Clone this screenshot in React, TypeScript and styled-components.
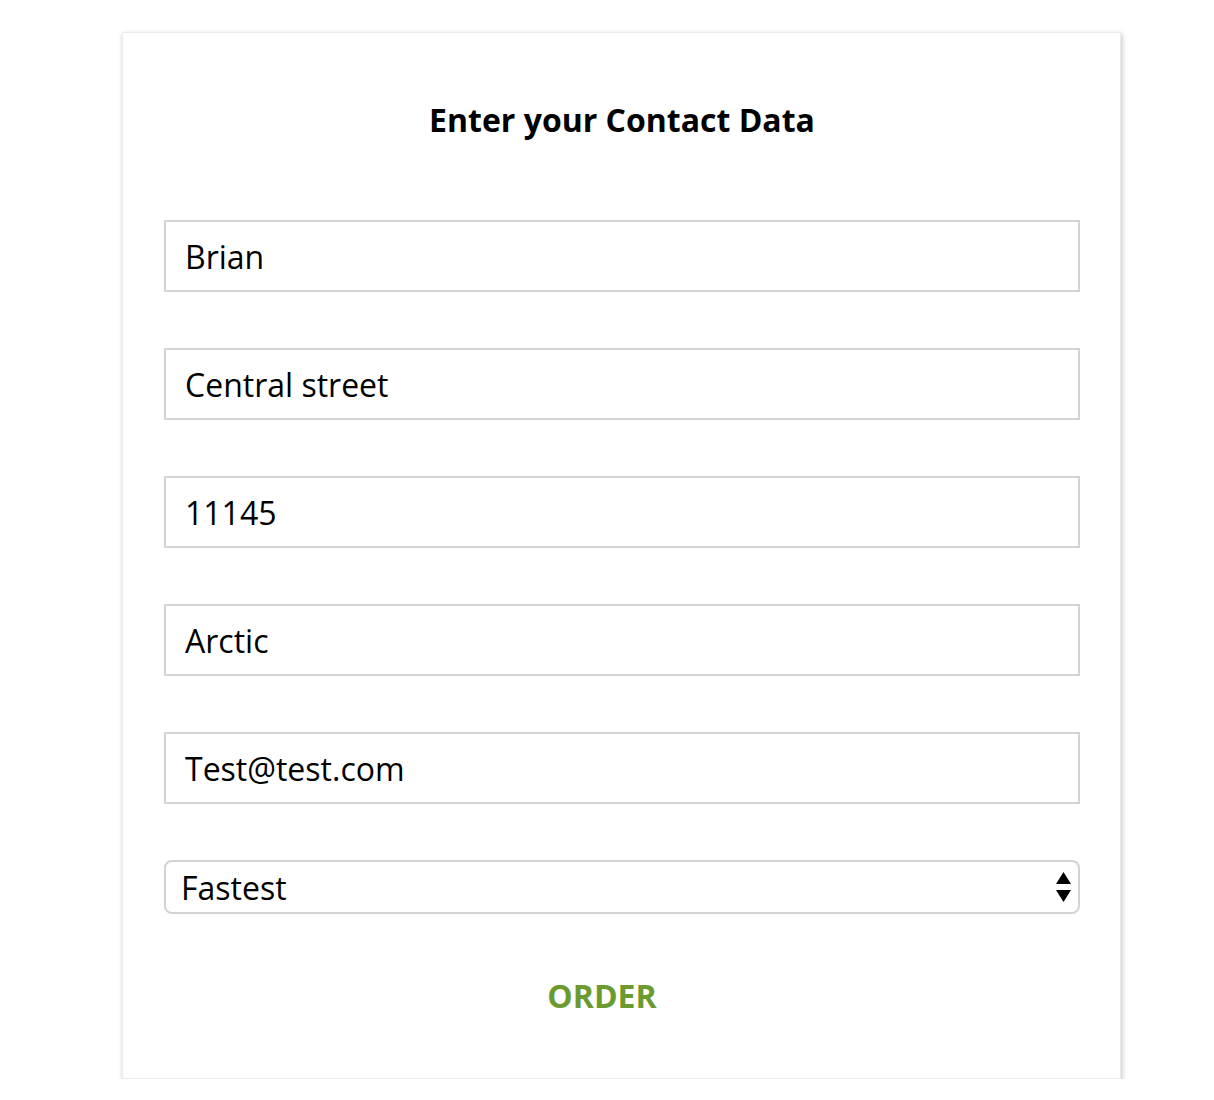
import { createGlobalStyle } from 'styled-components'
import styled from 'styled-components'

const GlobalStyle = createGlobalStyle`
  body {
    margin: 0;
    background: #ffffff;
    font-family: 'Open Sans', 'Noto Sans', sans-serif;
  }
`

const fields = ['Brian', 'Central street', '11145', 'Arctic', 'Test@test.com']

// Contact data form card with delivery selection and order action.
export default function App() {
  return (
    <>
      <GlobalStyle />
      <Card>
        <Title>Enter your Contact Data</Title>
        <Fields>
          {fields.map((value) => (
            <TextField key={value} type="text" defaultValue={value} />
          ))}
          <SelectWrap>
            <Select defaultValue="Fastest">
              <option>Fastest</option>
              <option>Cheapest</option>
            </Select>
            <Arrows width="15" height="32" viewBox="0 0 15 32">
              <path d="M7.5 1 L15 13 L0 13 Z" fill="#000" />
              <path d="M0 19 L15 19 L7.5 31 Z" fill="#000" />
            </Arrows>
          </SelectWrap>
        </Fields>
        <OrderButton type="button">ORDER</OrderButton>
      </Card>
    </>
  )
}

const Card = styled.section`
  box-sizing: border-box;
  width: 999px;
  margin: 32px 0 0 122px;
  padding: 65px 40px 62px 41px;
  background: #fff;
  border: 1px solid #ececec;
  box-shadow: 1px 2px 5px rgba(0, 0, 0, 0.25);
  display: flex;
  flex-direction: column;
  align-items: center;
`

const Title = styled.h2`
  margin: 0;
  font-size: 32px;
  font-weight: 700;
  line-height: 44px;
  color: #000;
`

const Fields = styled.div`
  align-self: stretch;
  display: flex;
  flex-direction: column;
  gap: 56px;
  margin-top: 78px;
`

const TextField = styled.input`
  box-sizing: border-box;
  width: 100%;
  height: 72px;
  padding: 0 19px;
  border: 2px solid #d3d3d3;
  border-radius: 0;
  font-family: 'Open Sans', 'Noto Sans', sans-serif;
  font-size: 32px;
  color: #000;
  outline: none;
`

const SelectWrap = styled.div`
  position: relative;
`

const Select = styled.select`
  box-sizing: border-box;
  width: 100%;
  height: 54px;
  padding: 0 15px;
  appearance: none;
  background: #fff;
  border: 2px solid #d3d3d3;
  border-radius: 8px;
  font-family: 'Open Sans', 'Noto Sans', sans-serif;
  font-size: 32px;
  color: #000;
  outline: none;
`

const Arrows = styled.svg`
  position: absolute;
  right: 9px;
  top: 11px;
  pointer-events: none;
`

const OrderButton = styled.button`
  margin: 62px 40px 0 0;
  padding: 0;
  background: none;
  border: none;
  font-family: 'Open Sans', 'Noto Sans', sans-serif;
  font-size: 32px;
  font-weight: 700;
  line-height: 40px;
  color: #6b9a2e;
  cursor: pointer;
`
